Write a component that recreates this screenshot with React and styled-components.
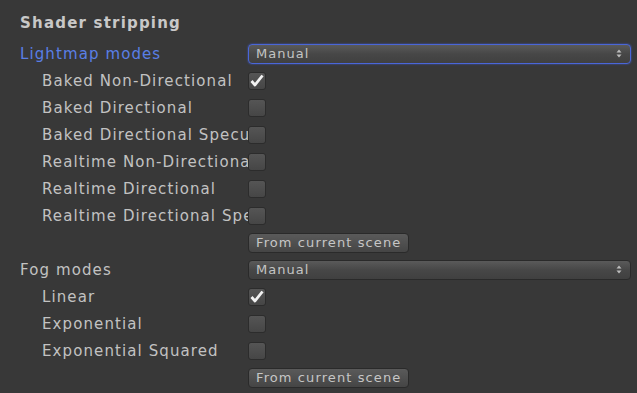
import styled, { createGlobalStyle } from "styled-components";

const Global = createGlobalStyle`
  html, body {
    margin: 0;
    padding: 0;
    background: #383838;
  }
  body {
    font-family: "DejaVu Sans", "Liberation Sans", sans-serif;
    color: #c4c4c4;
  }
`;

const Panel = styled.div`
  width: 637px;
  height: 393px;
  padding: 9px 6px 0 20px;
  box-sizing: border-box;
  overflow: hidden;
`;

const Title = styled.div`
  height: 31px;
  line-height: 29px;
  font-weight: bold;
  font-size: 15px;
  letter-spacing: 1.2px;
  color: #c8c8c8;
`;

const Row = styled.div`
  display: grid;
  grid-template-columns: 228px 1fr;
  align-items: center;
  height: 27px;
`;

const Label = styled.div`
  padding-left: ${(p) => (p.$nested ? "22px" : "0")};
  font-size: 15px;
  letter-spacing: 1.1px;
  white-space: nowrap;
  overflow: hidden;
  color: ${(p) => (p.$active ? "#5a7fe6" : "#c2c2c2")};
`;

const Dropdown = styled.div`
  display: flex;
  align-items: center;
  justify-content: space-between;
  height: 18px;
  padding: 0 8px 0 7px;
  border-radius: 4px;
  font-size: 13px;
  letter-spacing: 1px;
  color: #c4c4c4;
  background: linear-gradient(#5a5a5a, #474747 50%, #404040);
  border: 1px solid ${(p) => (p.$focused ? "#4a66d8" : "#2a2a2a")};
  box-shadow: ${(p) => (p.$focused ? "0 0 2px #3e5bd0" : "none")};
`;

const Arrows = styled.svg`
  width: 6px;
  height: 9px;
`;

const Check = styled.div`
  display: flex;
  align-items: center;
  justify-content: center;
  width: 16px;
  height: 16px;
  border-radius: 3px;
  background: linear-gradient(#555, #464646);
  border: 1px solid #2c2c2c;
`;

const Button = styled.div`
  display: inline-flex;
  align-items: center;
  justify-self: start;
  height: 18px;
  padding: 0 7px;
  border-radius: 4px;
  font-size: 13px;
  letter-spacing: 1.1px;
  color: #c6c6c6;
  background: linear-gradient(#5a5a5a, #454545);
  border: 1px solid #2a2a2a;
`;

function Select({ value, focused }) {
  return (
    <Dropdown $focused={focused}>
      <span>{value}</span>
      <Arrows viewBox="0 0 6 9">
        <path d="M3 0.5 L5.5 3.5 H0.5 Z M3 8.5 L5.5 5.5 H0.5 Z" fill="#bdbdbd" />
      </Arrows>
    </Dropdown>
  );
}

function Toggle({ on }) {
  return (
    <Check>
      {on && (
        <svg width="14" height="13" viewBox="0 0 14 13">
          <path d="M1.5 7 L5 11 L12.5 1.5" stroke="#f2f2f2" strokeWidth="2.8" fill="none" strokeLinejoin="round" />
        </svg>
      )}
    </Check>
  );
}

const lightmap = [
  ["Baked Non-Directional", true],
  ["Baked Directional", false],
  ["Baked Directional Specular", false],
  ["Realtime Non-Directional", false],
  ["Realtime Directional", false],
  ["Realtime Directional Specular", false],
];

const fog = [
  ["Linear", true],
  ["Exponential", false],
  ["Exponential Squared", false],
];

export default function App() {
  return (
    <Panel>
      <Global />
      <Title>Shader stripping</Title>
      <Row>
        <Label $active>Lightmap modes</Label>
        <Select value="Manual" focused />
      </Row>
      {lightmap.map(([name, on]) => (
        <Row key={name}>
          <Label $nested>{name}</Label>
          <Toggle on={on} />
        </Row>
      ))}
      <Row>
        <span />
        <Button>From current scene</Button>
      </Row>
      <Row>
        <Label>Fog modes</Label>
        <Select value="Manual" />
      </Row>
      {fog.map(([name, on]) => (
        <Row key={name}>
          <Label $nested>{name}</Label>
          <Toggle on={on} />
        </Row>
      ))}
      <Row>
        <span />
        <Button>From current scene</Button>
      </Row>
    </Panel>
  );
}
